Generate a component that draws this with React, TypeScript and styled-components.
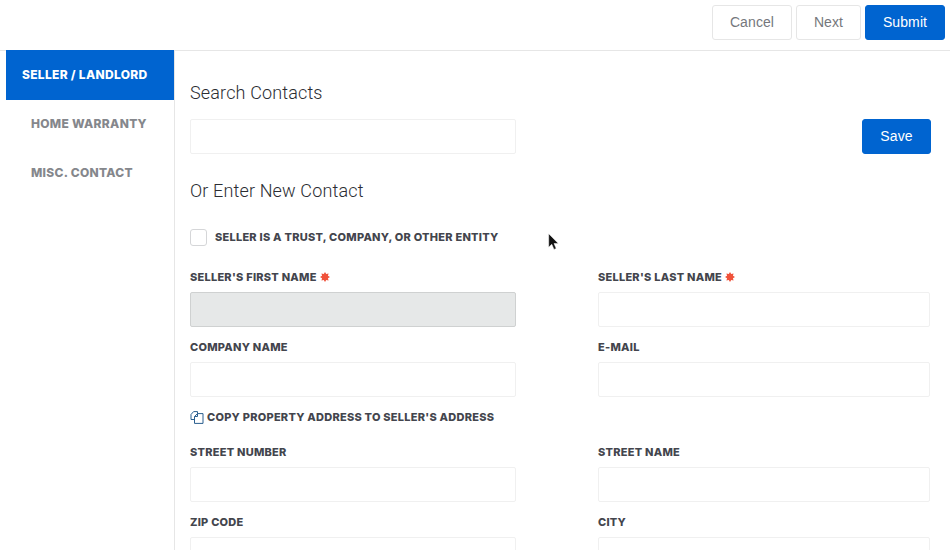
import React from 'react'
import styled, { createGlobalStyle } from 'styled-components'

const GlobalStyle = createGlobalStyle`
  html, body {
    margin: 0;
    padding: 0;
    height: 100%;
    background: #fff;
    overflow: hidden;
  }
  * {
    box-sizing: border-box;
  }
`

const Page = styled.div`
  width: 950px;
  height: 550px;
  overflow: hidden;
  position: relative;
  font-family: 'Liberation Sans', Arial, sans-serif;
`

const TopBar = styled.div`
  height: 51px;
  padding: 5px 5px 0 0;
  display: flex;
  justify-content: flex-end;
  align-items: flex-start;
  gap: 4px;
  border-bottom: 1px solid #e6e6e6;
`

const Button = styled.button<{ $primary?: boolean; $width: number }>`
  width: ${({ $width }) => $width}px;
  height: 35px;
  padding: 0 0 2px;
  font-family: 'Liberation Sans', Arial, sans-serif;
  font-size: 14px;
  letter-spacing: 0.1px;
  border-radius: 3px;
  border: 1px solid ${({ $primary }) => ($primary ? '#0064d0' : '#e6e6e6')};
  background: ${({ $primary }) => ($primary ? '#0064d0' : '#fff')};
  color: ${({ $primary }) => ($primary ? '#fff' : '#75777c')};
`

const Body = styled.div`
  display: flex;
  margin-top: -1px;
  height: 500px;
  padding-left: 6px;
`

const Sidebar = styled.nav`
  width: 169px;
  flex-shrink: 0;
  border-right: 1px solid #e6e6e6;
`

const NavItem = styled.div<{ $active?: boolean }>`
  height: ${({ $active }) => ($active ? 50 : 49)}px;
  width: 168px;
  padding: 0 0 2px ${({ $active }) => ($active ? 16 : 25)}px;
  display: flex;
  align-items: center;
  font-family: Inter, 'Noto Sans', sans-serif;
  font-size: 12px;
  font-weight: 800;
  letter-spacing: 0.3px;
  white-space: nowrap;
  color: ${({ $active }) => ($active ? '#fff' : '#85878c')};
  background: ${({ $active }) => ($active ? '#0064d0' : 'transparent')};
`

const Main = styled.main`
  flex: 1;
  padding: 31px 19px 0 15px;
`

const Heading = styled.h2<{ $spaced?: boolean }>`
  margin: ${({ $spaced }) => ($spaced ? '25px 0 24px' : '0 0 14px')};
  height: 24px;
  line-height: 24px;
  font-family: Roboto, 'Liberation Sans', sans-serif;
  font-size: 18px;
  font-weight: 300;
  letter-spacing: 0.15px;
  color: #2b2d32;
`

const SearchRow = styled.div`
  display: flex;
  justify-content: space-between;
  align-items: flex-start;
`

const Input = styled.input<{ $disabled?: boolean }>`
  display: block;
  width: 100%;
  height: 35px;
  border-radius: 2px;
  outline: none;
  border: 1px solid ${({ $disabled }) => ($disabled ? '#cfd1d1' : '#f0f0f0')};
  background: ${({ $disabled }) => ($disabled ? '#e6e8e8' : '#fff')};
`

const SearchBox = styled.div`
  width: 326px;
`

const CheckRow = styled.label`
  display: flex;
  align-items: center;
  gap: 8px;
  height: 20px;
  margin-bottom: 20px;
`

const CheckBox = styled.span`
  width: 17px;
  height: 17px;
  border: 1px solid #d5d6d8;
  border-radius: 3px;
  background: #fff;
`

const LabelText = styled.span`
  font-family: Inter, 'Noto Sans', sans-serif;
  font-size: 11px;
  font-weight: 800;
  letter-spacing: 0.25px;
  white-space: nowrap;
  color: #43454d;
`

const FormGrid = styled.div`
  display: grid;
  grid-template-columns: 326px 332px;
  column-gap: 82px;
`

const Field = styled.div`
  margin-bottom: 10px;
`

const FieldLabel = styled.div`
  display: flex;
  align-items: center;
  gap: 3px;
  height: 20px;
  margin-bottom: 5px;
`

const CopyRow = styled.div`
  grid-column: 1 / -1;
  display: flex;
  align-items: center;
  gap: 3px;
  height: 20px;
  margin-bottom: 15px;
`

const Required = () => (
  <svg width="10" height="10" viewBox="0 0 10 10">
    <path
      d="M5 0L6.22 2.04L8.54 1.46L7.96 3.78L10 5L7.96 6.22L8.54 8.54L6.22 7.96L5 10L3.78 7.96L1.46 8.54L2.04 6.22L0 5L2.04 3.78L1.46 1.46L3.78 2.04Z"
      fill="#f0523a"
    />
  </svg>
)

const CopyIcon = () => (
  <svg width="14" height="13" viewBox="0 0 14 13" fill="none" stroke="#2a5f8f" strokeWidth="1">
    <path d="M1 8.5V3.5L3.6 0.6H7.5V3" />
    <path d="M1 8.5H4.5" />
    <path d="M4.5 5.5L7.5 2.6H13V12.4H4.5V5.5Z" fill="#fff" />
    <path d="M4.5 5.5H7.5V2.6" />
  </svg>
)

const CursorMark = styled.svg`
  position: absolute;
  left: 548px;
  top: 233px;
`

const Cursor = () => (
  <CursorMark width="12" height="18" viewBox="0 0 12 18">
    <path d="M0.7 0.7V14.2L3.8 11.3L6 16.4L8.2 15.4L6 10.5H10.3Z" fill="#111" stroke="#fff" strokeOpacity="0.6" strokeWidth="0.8" />
  </CursorMark>
)

const FormField = ({ label, required, disabled }: { label: string; required?: boolean; disabled?: boolean }) => (
  <Field>
    <FieldLabel>
      <LabelText>{label}</LabelText>
      {required && <Required />}
    </FieldLabel>
    <Input $disabled={disabled} />
  </Field>
)

const App = () => {
  return (
    <Page>
      <GlobalStyle />
      <TopBar>
        <Button $width={80}>Cancel</Button>
        <Button $width={65}>Next</Button>
        <Button $width={80} $primary>
          Submit
        </Button>
      </TopBar>
      <Body>
        <Sidebar>
          <NavItem $active>SELLER / LANDLORD</NavItem>
          <NavItem>HOME WARRANTY</NavItem>
          <NavItem>MISC. CONTACT</NavItem>
        </Sidebar>
        <Main>
          <Heading>Search Contacts</Heading>
          <SearchRow>
            <SearchBox>
              <Input />
            </SearchBox>
            <Button $width={69} $primary>
              Save
            </Button>
          </SearchRow>
          <Heading $spaced>Or Enter New Contact</Heading>
          <CheckRow>
            <CheckBox />
            <LabelText>SELLER IS A TRUST, COMPANY, OR OTHER ENTITY</LabelText>
          </CheckRow>
          <FormGrid>
            <FormField label="SELLER'S FIRST NAME" required disabled />
            <FormField label="SELLER'S LAST NAME" required />
            <FormField label="COMPANY NAME" />
            <FormField label="E-MAIL" />
            <CopyRow>
              <CopyIcon />
              <LabelText>COPY PROPERTY ADDRESS TO SELLER'S ADDRESS</LabelText>
            </CopyRow>
            <FormField label="STREET NUMBER" />
            <FormField label="STREET NAME" />
            <FormField label="ZIP CODE" />
            <FormField label="CITY" />
          </FormGrid>
        </Main>
      </Body>
      <Cursor />
    </Page>
  )
}

export default App
